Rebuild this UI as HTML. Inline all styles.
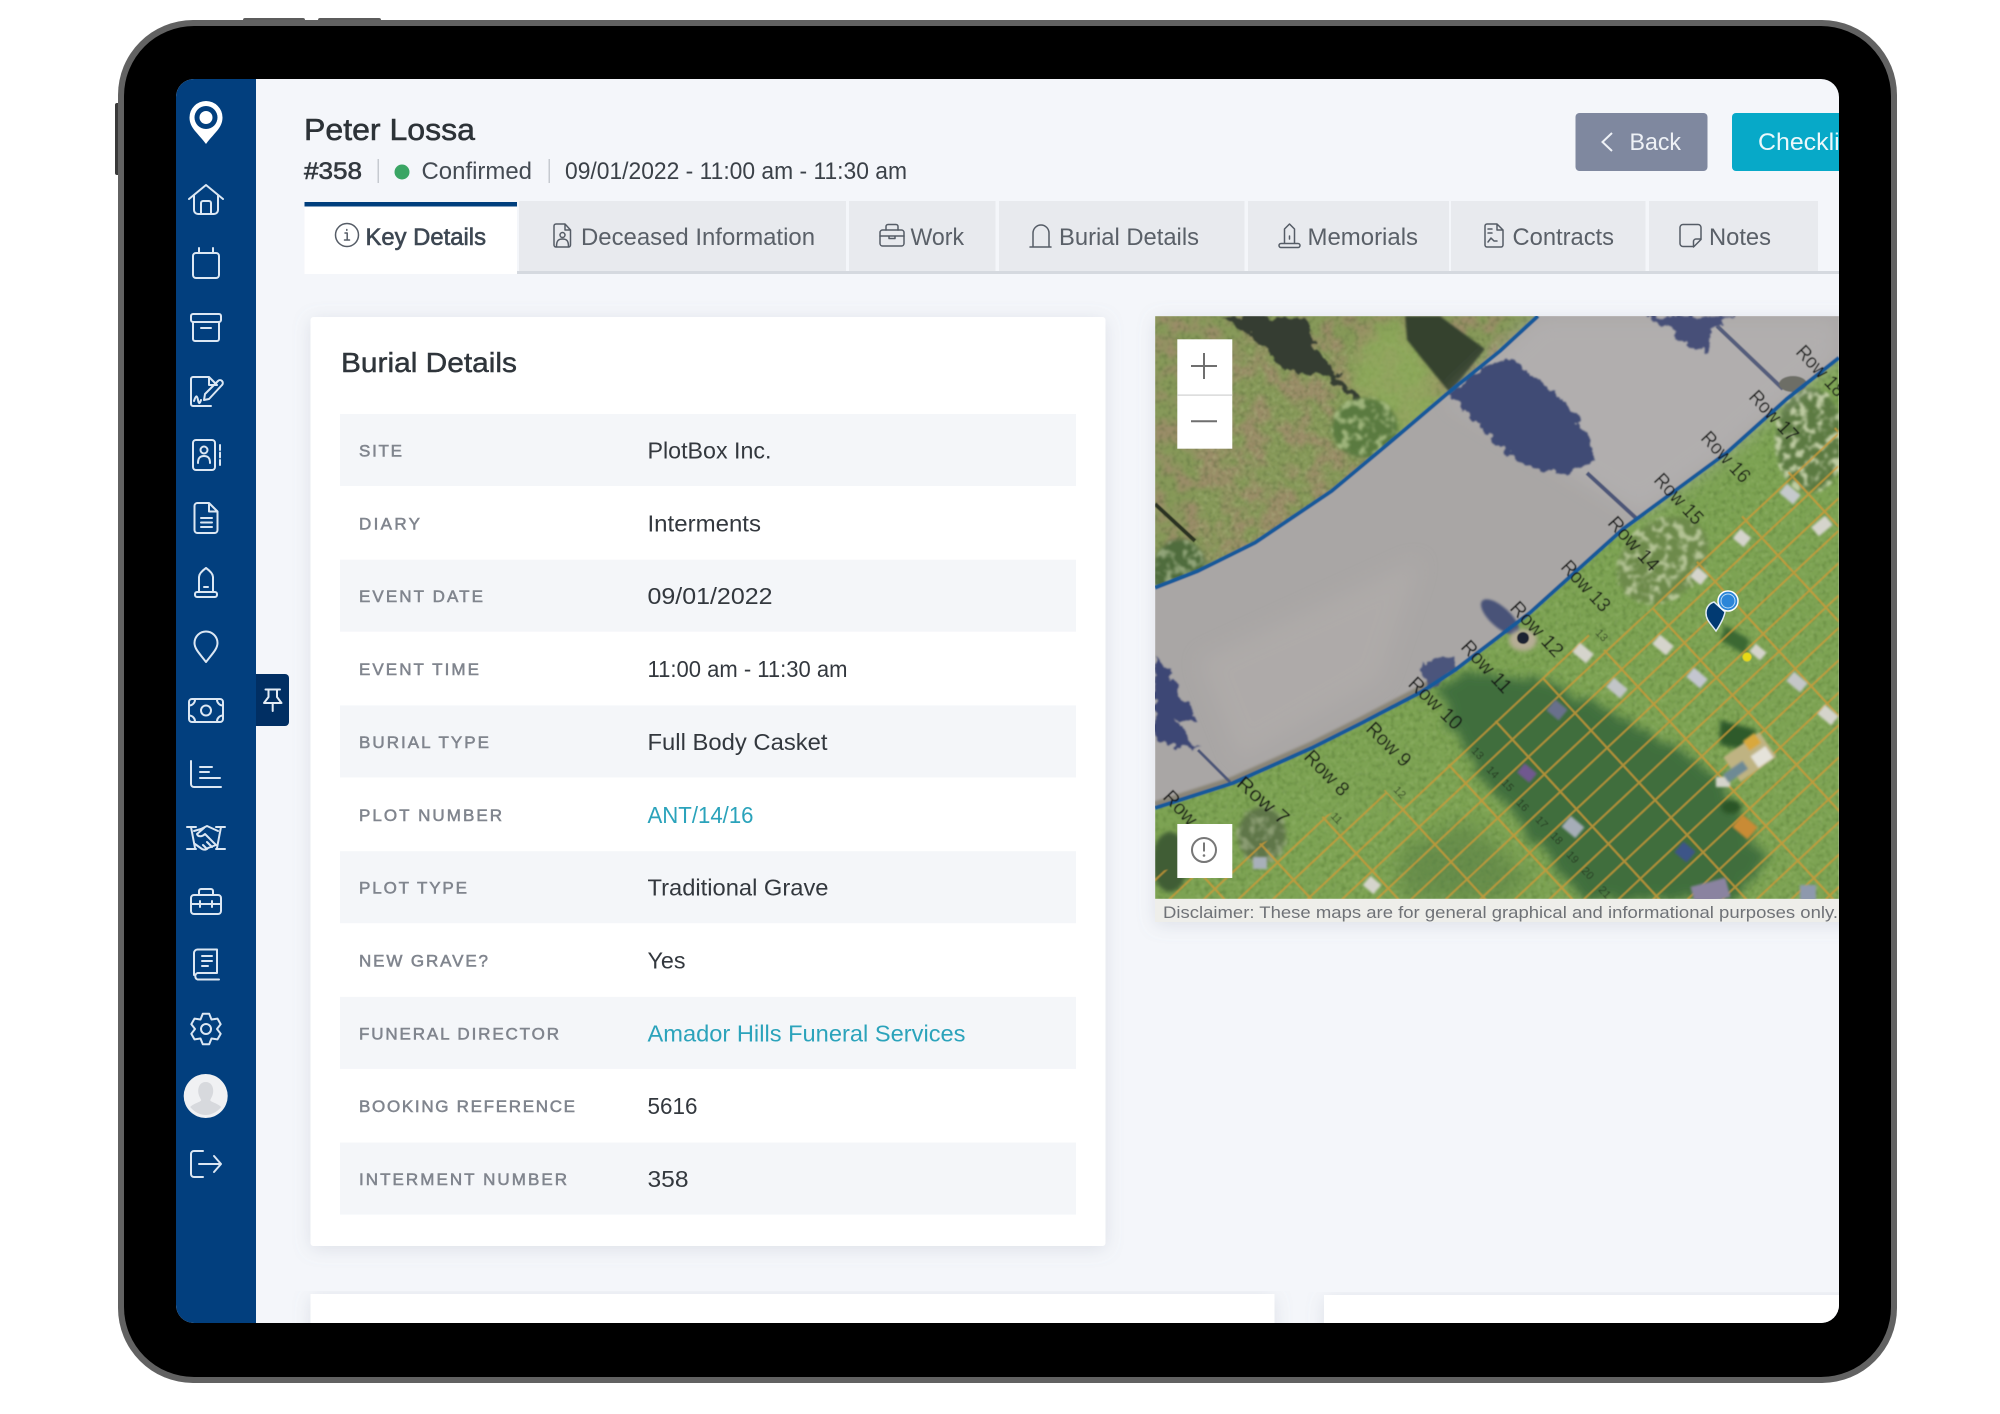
<!DOCTYPE html>
<html lang="en"><head><meta charset="utf-8"><title>Peter Lossa</title>
<style>html,body{margin:0;padding:0;background:#fff}svg{display:block}text{font-family:"Liberation Sans",sans-serif}</style></head>
<body>
<svg xmlns="http://www.w3.org/2000/svg" width="2000" height="1414" viewBox="0 0 2000 1414">
<defs>
<clipPath id="scr"><rect x="176" y="79" width="1663" height="1244" rx="18"/></clipPath>
<clipPath id="mapc"><rect x="1155" y="316" width="684" height="583"/></clipPath>
<clipPath id="btnc"><rect x="1732" y="113" width="107" height="58"/></clipPath>
<clipPath id="ug"><path d="M1155 316H1538L1500 351 1448 393 1388 444 1331.7 491 1255 542.7 1198 571 1155 587.7Z"/></clipPath>
<clipPath id="lg"><path d="M1155 808L1233 783 1311.7 748 1361.7 723 1421.7 691.7 1455 670 1530 612.7 1623 529 1726.7 452.7 1786.7 399 1839 357.7V899H1155Z"/></clipPath>
<clipPath id="gc"><path d="M1155 873L1262 843 1322 817 1385 790 1400 806 1448 765 1542 678 1587 633 1603 651 1650 610 1733 525 1838 425 1839 899H1155Z"/></clipPath>
<pattern id="grid" patternUnits="userSpaceOnUse" width="100" height="100" patternTransform="matrix(.467 -.438 .16 .174 1541.7 678.3)"><rect width="100" height="8" fill="#cf9a36"/><rect width="3.200" height="100" fill="#cf9a36"/></pattern>
<filter id="mot" x="-5%" y="-5%" width="110%" height="110%"><feTurbulence type="fractalNoise" baseFrequency=".12" numOctaves="2" seed="4" result="t"/><feColorMatrix in="t" values="0 0 0 0 0 0 0 0 0 0 0 0 0 0 0 5 0 0 0 -2.4" result="a"/><feComposite in="SourceGraphic" in2="a" operator="in"/><feGaussianBlur stdDeviation="1"/></filter>
<filter id="mot2" x="0" y="0" width="100%" height="100%"><feTurbulence type="fractalNoise" baseFrequency=".22" numOctaves="2" seed="9" result="t"/><feColorMatrix in="t" values="0 0 0 0 0 0 0 0 0 0 0 0 0 0 0 4 0 0 0 -2" result="a"/><feComposite in="SourceGraphic" in2="a" operator="in"/><feGaussianBlur stdDeviation=".6"/></filter>
<filter id="mot3" x="0" y="0" width="100%" height="100%"><feTurbulence type="fractalNoise" baseFrequency=".045" numOctaves="4" seed="12" result="t"/><feColorMatrix in="t" values="0 0 0 0 0 0 0 0 0 0 0 0 0 0 0 4 0 0 0 -1.6" result="a"/><feComposite in="SourceGraphic" in2="a" operator="in"/><feGaussianBlur stdDeviation="1.500"/></filter>
<filter id="jag" x="-20%" y="-20%" width="140%" height="140%"><feTurbulence type="fractalNoise" baseFrequency=".09" numOctaves="3" seed="7" result="t"/><feDisplacementMap in="SourceGraphic" in2="t" scale="16" xChannelSelector="R" yChannelSelector="G"/><feGaussianBlur stdDeviation=".8"/></filter>
<filter id="jagb" x="-20%" y="-20%" width="140%" height="140%"><feTurbulence type="fractalNoise" baseFrequency=".06" numOctaves="3" seed="3" result="t"/><feDisplacementMap in="SourceGraphic" in2="t" scale="22" xChannelSelector="R" yChannelSelector="G"/><feGaussianBlur stdDeviation="5"/></filter>
<filter id="bl2" x="-30%" y="-30%" width="160%" height="160%"><feGaussianBlur stdDeviation="2"/></filter>
<filter id="bl1" x="-30%" y="-30%" width="160%" height="160%"><feGaussianBlur stdDeviation="1"/></filter>
<filter id="bl6" x="-30%" y="-30%" width="160%" height="160%"><feGaussianBlur stdDeviation="10"/></filter>
<filter id="mb" x="0" y="0" width="100%" height="100%"><feGaussianBlur stdDeviation=".45"/></filter>
<filter id="sh" x="-5%" y="-5%" width="110%" height="110%"><feDropShadow dx="0" dy="3" stdDeviation="9" flood-color="#8a93a6" flood-opacity=".22"/></filter>
</defs>

<!-- device -->
<rect x="243" y="18" width="62" height="6" rx="2" fill="#5c5c5c"/>
<rect x="318" y="18" width="63" height="6" rx="2" fill="#5c5c5c"/>
<rect x="115" y="103" width="5" height="72" rx="2" fill="#3a3a3a"/>
<rect x="118" y="20" width="1779" height="1363" rx="75" fill="#626262"/>
<rect x="124" y="26" width="1767" height="1351" rx="70" fill="#000"/>

<g clip-path="url(#scr)">
<rect x="176" y="79" width="1663" height="1244" fill="#f4f6fa"/>

<!-- header -->
<text x="304" y="140" font-size="31" fill="#2c3237" stroke="#2c3237" stroke-width=".55" textLength="171" lengthAdjust="spacingAndGlyphs">Peter Lossa</text>
<text x="304" y="179" font-size="24" fill="#33393f" stroke="#33393f" stroke-width=".6" textLength="58" lengthAdjust="spacingAndGlyphs">#358</text>
<rect x="377.500" y="159" width="1.500" height="24" fill="#c6cad0"/>
<circle cx="402" cy="172" r="7.500" fill="#3aa564"/>
<text x="421.500" y="179" font-size="24" fill="#444b53" textLength="110.500" lengthAdjust="spacingAndGlyphs">Confirmed</text>
<rect x="548.500" y="159" width="1.500" height="24" fill="#c6cad0"/>
<text x="565" y="179" font-size="24" fill="#3b4148" textLength="342" lengthAdjust="spacingAndGlyphs">09/01/2022 - 11:00 am - 11:30 am</text>

<rect x="1575.500" y="113" width="132" height="58" rx="4" fill="#7f889f"/>
<path d="M1612 133L1602.500 142 1612 151" fill="none" stroke="#eef1f6" stroke-width="2"/>
<text x="1629.500" y="150" font-size="24" fill="#eef1f6" textLength="51.500" lengthAdjust="spacingAndGlyphs">Back</text>
<rect x="1732" y="113" width="130" height="58" rx="4" fill="#07a9c8"/>
<g clip-path="url(#btnc)"><text x="1758" y="150" font-size="24" fill="#eaf8fb" textLength="101" lengthAdjust="spacingAndGlyphs">Checklist</text></g>

<!-- tabs -->
<rect x="517" y="271" width="1322" height="3" fill="#d5d9df"/>
<g fill="#e8eaee">
<rect x="519" y="201" width="327" height="70"/><rect x="849" y="201" width="146.500" height="70"/><rect x="999" y="201" width="245.500" height="70"/><rect x="1248" y="201" width="201" height="70"/><rect x="1451" y="201" width="194.500" height="70"/><rect x="1649" y="201" width="169" height="70"/>
</g>
<rect x="304.500" y="202" width="212.500" height="72" fill="#fff"/>
<rect x="304.500" y="202" width="212.500" height="4.500" fill="#003f7d"/>
<g font-size="24" fill="#5a6068">
<text x="365.500" y="245" fill="#3d4752" stroke="#3d4752" stroke-width=".6" textLength="120.500" lengthAdjust="spacingAndGlyphs">Key Details</text>
<text x="581" y="245" textLength="234" lengthAdjust="spacingAndGlyphs">Deceased Information</text>
<text x="910.500" y="245" textLength="53.500" lengthAdjust="spacingAndGlyphs">Work</text>
<text x="1059" y="245" textLength="140" lengthAdjust="spacingAndGlyphs">Burial Details</text>
<text x="1307.500" y="245" textLength="110.500" lengthAdjust="spacingAndGlyphs">Memorials</text>
<text x="1512.500" y="245" textLength="101.500" lengthAdjust="spacingAndGlyphs">Contracts</text>
<text x="1709" y="245" textLength="62" lengthAdjust="spacingAndGlyphs">Notes</text>
</g>
<g fill="none" stroke="#555c66" stroke-width="1.500" stroke-linejoin="round" stroke-linecap="round">
<circle cx="347" cy="235" r="11.500"/><path d="M345 233h2.200v7M344.500 240h5M346.800 229.500v.8"/>
<path d="M556 224h9l5.500 6v15a2 2 0 0 1-2 2h-12.500a2 2 0 0 1-2-2v-19a2 2 0 0 1 2-2zM565 224v6h5.500"/><circle cx="562.500" cy="235" r="2.500"/><path d="M556.500 246.500c0-6 2-7.500 6-7.500s6 1.500 6 7.500"/>
<rect x="880" y="230" width="24" height="16" rx="2.500"/><path d="M886 230v-3.500a2 2 0 0 1 2-2h8a2 2 0 0 1 2 2V230M880 236h24M889 236v2.500h6V236"/>
<path d="M1033 246v-13a8 8 0 0 1 16 0v13M1030 247h21"/>
<path d="M1284.500 243v-14l5-5 5 5v14M1289.500 236v3M1281 243.500h17a1 1 0 0 1 0 4h-17a1 1 0 0 1 0-4z"/>
<path d="M1487 224h10l6 6v15a2 2 0 0 1-2 2h-14a2 2 0 0 1-2-2v-19a2 2 0 0 1 2-2zM1497 224v6h6M1488 229h4M1488 233h4M1488 242l3-4 3 3 3 0"/>
<path d="M1683 224.500h15a3 3 0 0 1 3 3v12l-7 7h-11a3 3 0 0 1-3-3v-16a3 3 0 0 1 3-3zM1701 239h-5a2.500 2.500 0 0 0-2.500 2.500v5.500"/>
</g>

<!-- bottom cards -->
<rect x="310.500" y="1294" width="964" height="60" fill="#fff" filter="url(#sh)"/>
<rect x="1324" y="1295" width="540" height="60" fill="#fff" filter="url(#sh)"/>

<!-- burial details card -->
<rect x="310.500" y="317" width="795" height="929" rx="3" fill="#fff" filter="url(#sh)"/>
<text x="341" y="372" font-size="27.500" fill="#2f353b" stroke="#2f353b" stroke-width=".45" textLength="176" lengthAdjust="spacingAndGlyphs">Burial Details</text>
<g fill="#f4f6f9">
<rect x="340" y="414" width="736" height="72"/><rect x="340" y="559.700" width="736" height="72"/><rect x="340" y="705.400" width="736" height="72"/><rect x="340" y="851.200" width="736" height="72"/><rect x="340" y="996.900" width="736" height="72"/><rect x="340" y="1142.600" width="736" height="72"/>
</g>
<g font-size="17" fill="#80858e" stroke="#80858e" stroke-width=".55">
<text x="359" y="456.500" textLength="43">SITE</text>
<text x="359" y="529.400" textLength="61">DIARY</text>
<text x="359" y="602.200" textLength="124">EVENT DATE</text>
<text x="359" y="675.100" textLength="120">EVENT TIME</text>
<text x="359" y="747.900" textLength="130">BURIAL TYPE</text>
<text x="359" y="820.800" textLength="143">PLOT NUMBER</text>
<text x="359" y="893.700" textLength="108">PLOT TYPE</text>
<text x="359" y="966.500" textLength="129">NEW GRAVE?</text>
<text x="359" y="1039.400" textLength="200">FUNERAL DIRECTOR</text>
<text x="359" y="1112.200" textLength="216">BOOKING REFERENCE</text>
<text x="359" y="1185.100" textLength="208">INTERMENT NUMBER</text>
</g>
<g font-size="23" fill="#33383e">
<text x="647.500" y="458.500" textLength="124" lengthAdjust="spacingAndGlyphs">PlotBox Inc.</text>
<text x="647.500" y="531.400" textLength="113.500" lengthAdjust="spacingAndGlyphs">Interments</text>
<text x="647.500" y="604.200" textLength="125" lengthAdjust="spacingAndGlyphs">09/01/2022</text>
<text x="647.500" y="677.100" textLength="200" lengthAdjust="spacingAndGlyphs">11:00 am - 11:30 am</text>
<text x="647.500" y="749.900" textLength="180" lengthAdjust="spacingAndGlyphs">Full Body Casket</text>
<text x="647.500" y="822.800" fill="#2ba3bb" textLength="106" lengthAdjust="spacingAndGlyphs">ANT/14/16</text>
<text x="647.500" y="895.700" textLength="181" lengthAdjust="spacingAndGlyphs">Traditional Grave</text>
<text x="647.500" y="968.500" textLength="38" lengthAdjust="spacingAndGlyphs">Yes</text>
<text x="647.500" y="1041.400" fill="#2ba3bb" textLength="318" lengthAdjust="spacingAndGlyphs">Amador Hills Funeral Services</text>
<text x="647.500" y="1114.200" textLength="50" lengthAdjust="spacingAndGlyphs">5616</text>
<text x="647.500" y="1187.100" textLength="41" lengthAdjust="spacingAndGlyphs">358</text>
</g>

<!-- map -->
<rect x="1155" y="316" width="700" height="606" fill="#eeeeea" filter="url(#sh)"/>
<g clip-path="url(#mapc)">
<g filter="url(#mb)">
<rect x="1155" y="316" width="684" height="583" fill="#7aa052"/>
<g clip-path="url(#ug)">
<rect x="1155" y="316" width="400" height="300" fill="#87995a"/>
<rect x="1155" y="316" width="400" height="300" fill="#9f8a6c" opacity=".8" filter="url(#mot3)"/>
<rect x="1155" y="316" width="400" height="300" fill="#4a5f33" opacity=".3" filter="url(#mot2)"/>
<rect x="1155" y="316" width="400" height="300" fill="#c2cf96" opacity=".22" filter="url(#mot2)" transform="translate(40 25)"/>
<ellipse cx="1395" cy="390" rx="45" ry="70" fill="#8fae5c" opacity=".7" filter="url(#bl6)"/>
<path d="M1222 316H1305L1312 343 1332 369 1362 403 1355 403 1328 376 1298 373 1278 364 1252 336Z" fill="#353e31" filter="url(#jag)"/>
<path d="M1405 316H1440L1485 349 1450 393 1422 359 1407 340Z" fill="#36432f" filter="url(#bl1)"/>
<path d="M1155 504L1195 541" stroke="#2b3322" stroke-width="4" fill="none"/>
<ellipse cx="1365" cy="428" rx="33" ry="30" fill="#5a7a40" filter="url(#bl2)"/>
<ellipse cx="1365" cy="428" rx="34" ry="32" fill="#b6c890" opacity=".75" filter="url(#mot)"/>
<ellipse cx="1180" cy="575" rx="28" ry="36" fill="#506c3c" filter="url(#bl2)"/>
<ellipse cx="1180" cy="575" rx="28" ry="36" fill="#b5c39a" opacity=".65" filter="url(#mot)"/>
</g>
<g clip-path="url(#lg)">
<rect x="1155" y="340" width="684" height="560" fill="#7da353"/>
<rect x="1155" y="340" width="684" height="560" fill="#46692f" opacity=".3" filter="url(#mot2)"/>
<rect x="1155" y="340" width="684" height="560" fill="#a3bf7c" opacity=".28" filter="url(#mot2)" transform="translate(33 17)"/>
<path d="M1437 690L1467 670 1540 678 1600 707 1677 747 1717 777 1733 807 1767 860 1733 900H1587L1540 847 1483 780 1457 740Z" fill="#3f6e3c" filter="url(#jagb)"/>
<path d="M1400 850L1467 820 1533 880 1500 900H1400Z" fill="#587f45" opacity=".6" filter="url(#bl6)"/>
<path d="M1720 720L1757 730 1745 750 1720 745Z" fill="#2e5a2a" filter="url(#bl2)"/>
<ellipse cx="1731" cy="807" rx="10" ry="7" fill="#2b5428" filter="url(#bl2)"/>
<path d="M1725 625L1750 640 1745 655 1720 640Z" fill="#3b6733" filter="url(#bl2)"/>
<ellipse cx="1663" cy="560" rx="50" ry="38" transform="rotate(-40 1663 560)" fill="#6d8a4c" filter="url(#bl2)"/>
<ellipse cx="1663" cy="560" rx="52" ry="40" transform="rotate(-40 1663 560)" fill="#c6d2a8" opacity=".8" filter="url(#mot)"/>
<ellipse cx="1810" cy="440" rx="34" ry="52" fill="#5c7a42" filter="url(#bl2)"/>
<ellipse cx="1810" cy="440" rx="36" ry="54" fill="#d0dab4" opacity=".85" filter="url(#mot)"/>
<ellipse cx="1262" cy="835" rx="24" ry="28" fill="#5f7648" filter="url(#bl2)"/>
<ellipse cx="1262" cy="835" rx="26" ry="30" fill="#a8b68e" opacity=".6" filter="url(#mot)"/>
<ellipse cx="1170" cy="862" rx="18" ry="30" fill="#3f5d35" filter="url(#bl2)"/>
</g>
<path d="M1155 587.700L1198 571 1255 542.700 1331.700 491 1388 444 1448 393 1500 351 1538 316H1839V357.700L1786.700 399 1726.700 452.700 1623 529 1530 612.700 1455 670 1421.700 691.700 1361.700 723 1311.700 748 1233 783 1155 808Z" fill="#a9a6a5"/>
<path d="M1538 316H1839V357.700L1786.700 399 1726.700 452.700 1640 515 1450 400Z" fill="#b6b3b3" opacity=".65" filter="url(#bl6)"/>
<path d="M1200 660L1420 560 1380 680 1240 760Z" fill="#b2aeac" opacity=".6" filter="url(#bl6)"/>
<path d="M1155 805L1233 780 1311.700 745 1361.700 720 1421.700 688.700 1455 667" fill="none" stroke="#6f6a52" stroke-width="7" opacity=".55" filter="url(#bl1)"/>
<path d="M1448 393L1495 360 1520 365 1567 403 1593 443 1590 463 1560 476 1533 469 1500 448 1480 425Z" fill="#414c74" filter="url(#jag)"/>
<path d="M1587 473L1637 519" stroke="#4d5678" stroke-width="4" fill="none"/>
<path d="M1643 316H1737L1713 326 1707 353 1687 344 1670 329Z" fill="#464f78" filter="url(#jag)"/>
<path d="M1717 326L1783 389" stroke="#555d7c" stroke-width="4" fill="none"/>
<ellipse cx="1793" cy="384" rx="14" ry="8" fill="#6d6e66"/>
<path d="M1155 658L1172 677 1198 720 1175 720 1198 750 1155 740Z" fill="#3d4674" filter="url(#jag)"/>
<path d="M1198 750L1230 782" stroke="#4d5678" stroke-width="3" fill="none"/>
<path d="M1422 663L1455 657 1455 670 1428 690Z" fill="#4b557c" filter="url(#jag)"/>
<ellipse cx="1500" cy="617" rx="24" ry="10" transform="rotate(42 1500 617)" fill="#4a5278" filter="url(#bl1)"/>
<ellipse cx="1523" cy="640" rx="14" ry="11" fill="#b6ad95" filter="url(#bl2)"/>
<circle cx="1523" cy="638" r="6" fill="#1c2433"/>

<rect x="1155" y="316" width="684" height="583" fill="url(#grid)" clip-path="url(#gc)" opacity=".78"/>

<path d="M1155 587.700L1198 571 1255 542.700 1331.700 491 1388 444 1448 393 1500 351 1538 316" fill="none" stroke="#135a9a" stroke-width="4" stroke-linejoin="round"/>
<path d="M1155 808L1233 783 1311.700 748 1361.700 723 1421.700 691.700 1455 670 1530 612.700 1623 529 1726.700 452.700 1786.700 399 1839 357.700" fill="none" stroke="#135a9a" stroke-width="4" stroke-linejoin="round"/>

<!-- graves -->
<g fill="#d5d4cc" filter="url(#bl1)">
<rect x="-9" y="-6" width="18" height="12" transform="translate(1583 653) rotate(40)"/>
<rect x="-9" y="-6" width="18" height="12" transform="translate(1663 645) rotate(40)"/>
<rect x="-9" y="-6" width="18" height="12" fill="#c2c5c8" transform="translate(1617 688) rotate(40)"/>
<rect x="-9" y="-6" width="18" height="12" fill="#c4c6d0" transform="translate(1697 678) rotate(40)"/>
<rect x="-9" y="-6" width="18" height="12" fill="#c4c6c8" transform="translate(1797 682) rotate(40)"/>
<rect x="-9" y="-6" width="18" height="12" transform="translate(1828 715) rotate(40)"/>
<rect x="-7" y="-5" width="14" height="10" transform="translate(1758 652) rotate(40)"/>
<rect x="-9" y="-6" width="18" height="12" fill="#c5c9cc" transform="translate(1790 494) rotate(40)"/>
<rect x="-9" y="-6" width="18" height="12" transform="translate(1822 526) rotate(-40)"/>
<rect x="-7" y="-6" width="14" height="12" transform="translate(1742 538) rotate(40)"/>
<rect x="-7" y="-6" width="14" height="12" transform="translate(1699 576) rotate(40)"/>
<rect x="-7" y="-6" width="14" height="12" transform="translate(1372 885) rotate(40)"/>
<rect x="-6" y="-5" width="14" height="10" transform="translate(1722 782)"/>
<rect x="-8" y="-7" width="16" height="14" fill="#69708c" transform="translate(1557 710) rotate(40)"/>
<rect x="-8" y="-6" width="16" height="12" fill="#70598f" transform="translate(1527 773) rotate(40)"/>
<rect x="-9" y="-7" width="18" height="14" fill="#a6adb8" transform="translate(1573 827) rotate(40)"/>
<rect x="-8" y="-7" width="16" height="14" fill="#3e5488" transform="translate(1685 852) rotate(40)"/>
<rect x="-10" y="-8" width="20" height="16" fill="#c98b34" transform="translate(1745 827) rotate(40)"/>
<rect x="-18" y="-8" width="36" height="20" fill="#8a83a0" transform="translate(1710 890) rotate(-15)"/>
<rect x="-8" y="-8" width="16" height="16" fill="#8e99ad" transform="translate(1808 893)"/>
<rect x="-7" y="-6" width="14" height="12" fill="#a8b0ba" transform="translate(1260 863)"/>
<rect x="-22" y="-15" width="44" height="30" fill="#bfb382" transform="translate(1750 757) rotate(-35)"/>
<rect x="-9" y="-7" width="18" height="14" fill="#e5e3da" transform="translate(1762 757) rotate(-35)"/>
<rect x="-7" y="-6" width="14" height="12" fill="#d9a83c" transform="translate(1752 742) rotate(-35)"/>
<rect x="-15" y="-5" width="24" height="10" fill="#6e8a94" transform="translate(1738 770) rotate(-35)"/>
</g>
<circle cx="1747" cy="657" r="4.500" fill="#e8d914"/>

<!-- row labels -->
<g font-size="20" fill="#141816">
<text transform="translate(1705 434) rotate(47)" y="7" textLength="62" lengthAdjust="spacingAndGlyphs">Row 16</text>
<text transform="translate(1658 476) rotate(47)" y="7" textLength="62" lengthAdjust="spacingAndGlyphs">Row 15</text>
<text transform="translate(1612 519) rotate(48)" y="7" textLength="66" lengthAdjust="spacingAndGlyphs">Row 14</text>
<text transform="translate(1565 563) rotate(47)" y="7" textLength="62" lengthAdjust="spacingAndGlyphs">Row 13</text>
<text transform="translate(1753 393) rotate(47)" y="7" textLength="62" lengthAdjust="spacingAndGlyphs">Row 17</text>
<text transform="translate(1800 348) rotate(47)" y="7" textLength="62" lengthAdjust="spacingAndGlyphs">Row 18</text>
<text transform="translate(1514 604) rotate(47)" y="7" textLength="68" lengthAdjust="spacingAndGlyphs">Row 12</text>
<text transform="translate(1465 643) rotate(47)" y="7" textLength="64" lengthAdjust="spacingAndGlyphs">Row 11</text>
<text transform="translate(1412 680) rotate(44)" y="7" textLength="66" lengthAdjust="spacingAndGlyphs">Row 10</text>
<text transform="translate(1370 725) rotate(45)" y="7" textLength="54" lengthAdjust="spacingAndGlyphs">Row 9</text>
<text transform="translate(1308 753) rotate(46)" y="7" textLength="55" lengthAdjust="spacingAndGlyphs">Row 8</text>
<text transform="translate(1240 780) rotate(41)" y="7" textLength="62" lengthAdjust="spacingAndGlyphs">Row 7</text>
<text transform="translate(1167 793) rotate(47)" y="7" textLength="40" lengthAdjust="spacingAndGlyphs">Row</text>
</g>
<g font-size="11" fill="#1e2a1a" opacity=".7" text-anchor="middle">
<text transform="translate(1478 753) rotate(47)" y="4">13</text><text transform="translate(1493 772) rotate(47)" y="4">14</text><text transform="translate(1508 785) rotate(47)" y="4">15</text><text transform="translate(1523 805) rotate(47)" y="4">16</text><text transform="translate(1542 822) rotate(47)" y="4">17</text><text transform="translate(1557 838) rotate(47)" y="4">18</text><text transform="translate(1573 857) rotate(47)" y="4">19</text><text transform="translate(1588 873) rotate(47)" y="4">20</text><text transform="translate(1605 892) rotate(47)" y="4">21</text><text transform="translate(1400 792) rotate(47)" y="4">12</text><text transform="translate(1337 818) rotate(47)" y="4">11</text><text transform="translate(1602 635) rotate(47)" y="4">13</text>
</g>
</g>

<!-- pins -->
<path d="M1716 631C1711 624 1706 620 1706 613 1706 607 1710 603 1714 602L1725 612C1724 618 1720 625 1716 631Z" fill="#013a72" stroke="#dfeaf5" stroke-width="1.500"/>
<circle cx="1728" cy="601" r="10" fill="#2a85d8" stroke="#fff" stroke-width="1.500"/>
<circle cx="1728" cy="601" r="7" fill="#2a85d8" stroke="#bcdcf5" stroke-width="1"/>

<!-- map controls -->
<rect x="1177.300" y="339.300" width="55" height="109.400" fill="#fff"/>
<rect x="1177.300" y="394.500" width="55" height="1.200" fill="#cfd0d0"/>
<path d="M1191 366h26M1204 353v26M1191 421.300h26" stroke="#6f6f6f" stroke-width="2" fill="none"/>
<rect x="1177.300" y="824" width="55" height="54" fill="#fff"/>
<circle cx="1204" cy="850" r="12" fill="none" stroke="#777" stroke-width="2"/>
<path d="M1204 842.500v9" stroke="#777" stroke-width="2"/><circle cx="1204" cy="855.500" r="1.300" fill="#777"/>
</g>
<text x="1163" y="918" font-size="17" fill="#6f7277" textLength="675" lengthAdjust="spacingAndGlyphs">Disclaimer: These maps are for general graphical and informational purposes only.</text>

<!-- sidebar -->
<rect x="176" y="79" width="80" height="1244" fill="#023f7e"/>
<path d="M206 144C198 133 189.500 128 189.500 117.500a16.500 16.500 0 0 1 33 0C222.500 128 214 133 206 144Z" fill="#fff"/>
<circle cx="206" cy="117.500" r="11.500" fill="#023f7e"/><circle cx="206" cy="117.500" r="6.500" fill="#fff"/>

<g fill="none" stroke="#dce7f3" stroke-width="2" stroke-linecap="round" stroke-linejoin="round">
<g transform="translate(206 200)"><path d="M-17-1L0-15 17-1M-12-5V10a4 4 0 0 0 4 4H8a4 4 0 0 0 4-4V-5M-5 14V3a2 2 0 0 1 2-2h6a2 2 0 0 1 2 2V14"/></g>
<g transform="translate(206 264)"><rect x="-13" y="-11" width="26" height="25" rx="3"/><path d="M-7-16v5M7-16v5"/></g>
<g transform="translate(206 328)"><rect x="-15" y="-14" width="30" height="8" rx="2"/><path d="M-13-6V11a2 2 0 0 0 2 2H11a2 2 0 0 0 2-2V-6M-5 0H5"/></g>
<g transform="translate(206 392)"><path d="M3-15H-13a2 2 0 0 0-2 2V12a2 2 0 0 0 2 2H5M3-15V-7h8M3-15L11-7"/><path d="M-2 8L-1 2 12-11a2.500 2.500 0 0 1 4 4L3 7Z"/><path d="M-12 9c2-6 3-6 4-1s2 3 3 0"/></g>
<g transform="translate(206 455)"><rect x="-13" y="-15" width="22" height="30" rx="3"/><circle cx="-2" cy="-5" r="3.500"/><path d="M-8 8c0-5 2-7 6-7s6 2 6 7"/><path d="M14-10v5M14-2.500v5M14 5v5"/></g>
<g transform="translate(206 518)"><path d="M-8.500-15H3L11.500-6.500V12a3 3 0 0 1-3 3H-8.500a3 3 0 0 1-3-3V-12a3 3 0 0 1 3-3ZM3-15V-6.500h8.500M-5 0H6M-5 4.500H6M-5 9H6"/></g>
<g transform="translate(206 583)"><path d="M-7 9V-6Q-7-10 0-15 7-10 7-6V9M-2 4H2"/><rect x="-11" y="9" width="22" height="5" rx="2"/></g>
<g transform="translate(206 647)"><path d="M0 15C-6 7-11.500 2-11.500-4A11.500 11.500 0 0 1 11.500-4C11.500 2 6 7 0 15Z"/></g>
<g transform="translate(206 710.500)"><rect x="-17" y="-11.500" width="34" height="23" rx="3"/><circle r="5"/><path d="M-17-5a6 6 0 0 0 6-6.500M17-5a6 6 0 0 1-6-6.500M-17 5a6 6 0 0 1 6 6.500M17 5a6 6 0 0 0-6 6.500"/></g>
<g transform="translate(206 774)"><path d="M-15-13V10a3 3 0 0 0 3 3H15M-6-7H6M-6-2H3M-6 4H14"/></g>
<g transform="translate(206 838)"><path d="M-19-11h9M-15-11L-11 10M-19 11h9M19-11h-9M15-11L11 10M19 11h-9"/><path d="M-12-7L-5-9 1-12 12-7M-2-10L-9-4c1 3 5 3 8 0L10 7M-11 6L-4 11c2 1 4 1 6-1L10 7M-3 7L1 11M1 4L6 9"/></g>
<g transform="translate(206 901)"><rect x="-15" y="-6" width="30" height="19" rx="3"/><path d="M-7-6V-10a2 2 0 0 1 2-2H5a2 2 0 0 1 2 2V-6M-15 3H15M-6 0V6M6 0V6"/></g>
<g transform="translate(206 965)"><path d="M-12 11V-11a3.500 3.500 0 0 1 3.500-3.500H11V9H-8.500a3.500 3.500 0 0 0 0 6.500H13M-4-8H6M-4-3H6M-4 2H2" transform="translate(0 -1)"/></g>
<g transform="translate(206 1029)"><path d="M3.200-15.200L5.500-9.500 11.500-10.400 14.700-4.800 11 0 14.700 4.800 11.500 10.400 5.500 9.500 3.200 15.200H-3.200L-5.500 9.500-11.500 10.400-14.700 4.800-11 0-14.700-4.800-11.500-10.400-5.500-9.500-3.200-15.200Z"/><circle r="5"/></g>
<g transform="translate(206 1164)"><path d="M-3-13H-12a3 3 0 0 0-3 3V10a3 3 0 0 0 3 3H-3M-7 0H15M8-8L15 0 8 8"/></g>
</g>
<circle cx="205.700" cy="1096" r="22" fill="#f0f1f3"/>
<path d="M205.700 1082c5 0 7.500 4 7.500 9 0 4-2 7-3 9 0 2 7 3 11 7-4 5-10 8-15.500 8s-11.500-3-15.500-8c4-4 11-5 11-7-1-2-3-5-3-9 0-5 2.500-9 7.500-9Z" fill="#d7d9dd"/>

<path d="M256 674h29a4 4 0 0 1 4 4v44a4 4 0 0 1-4 4h-29Z" fill="#012f63"/>
<path d="M265.500 689.500h14.500M268.500 689.500v7.500l-4.500 6h17.500l-4.500-6v-7.500M272.700 703v8" fill="none" stroke="#e4ecf5" stroke-width="2" stroke-linejoin="round" stroke-linecap="round"/>
</g>
</svg>
</body></html>
